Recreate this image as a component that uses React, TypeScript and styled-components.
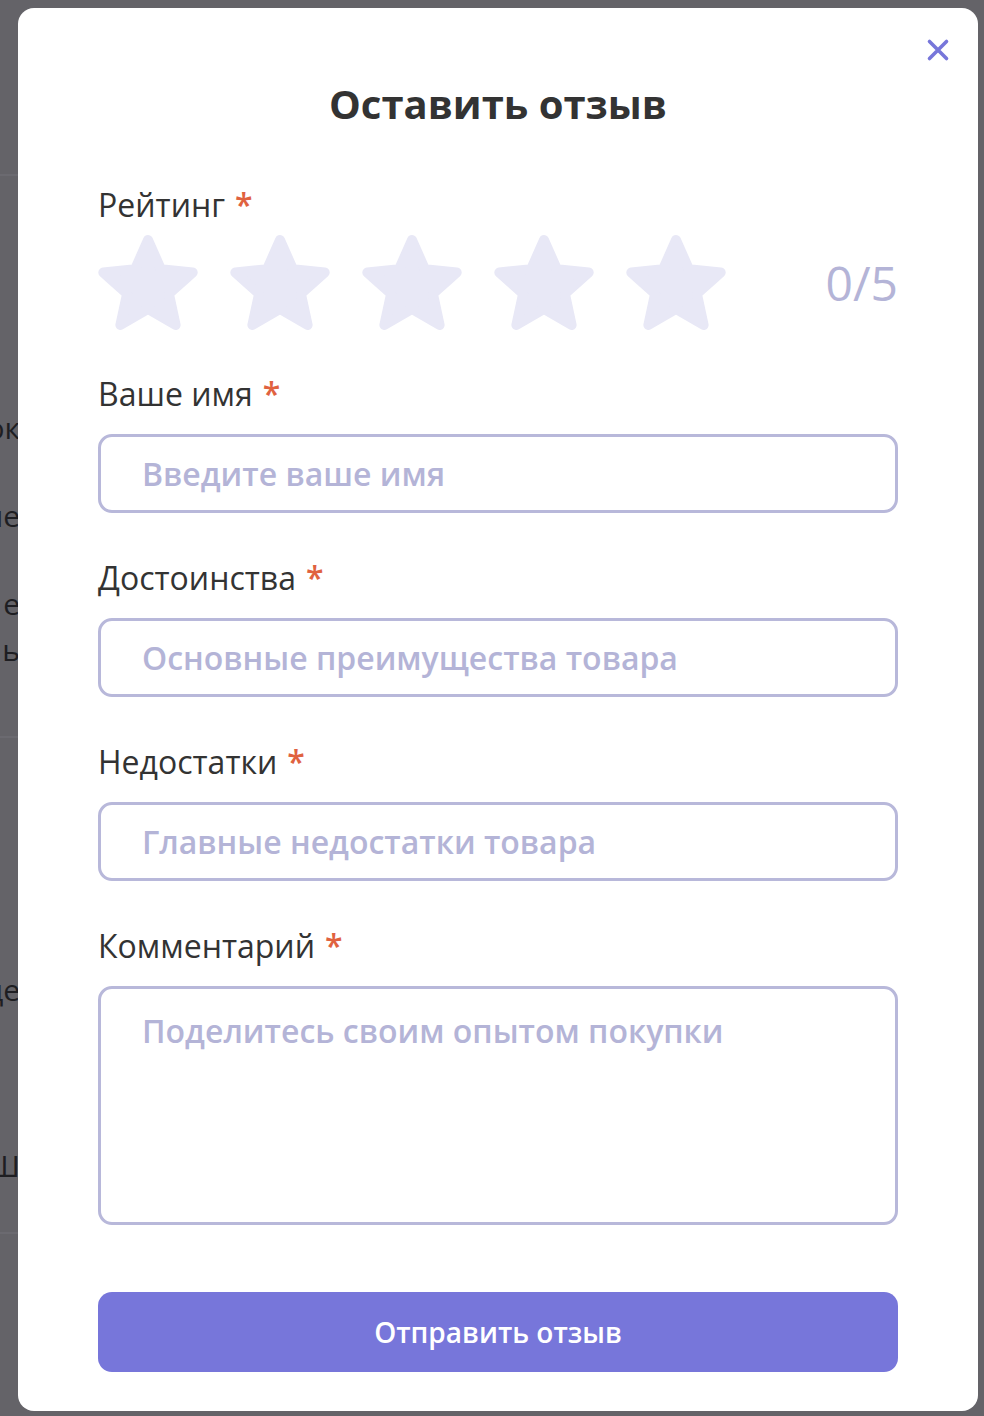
import React from "react";
import styled, { createGlobalStyle } from "styled-components";

const GlobalStyle = createGlobalStyle`
    html, body {
        margin: 0;
        padding: 0;
        width: 984px;
        height: 1416px;
        overflow: hidden;
        background-color: #646368;
        font-family: "Open Sans", "Noto Sans", sans-serif;
    }
    * { box-sizing: border-box; }
`;

const PageBehind = styled.div`
    width: 984px;
    height: 1416px;
    display: grid;
    grid-template-columns: 40px 1fr 40px;
    margin-left: -20px;
    color: #1e1e22;
    font-size: 30px;
`;

const BehindColumn = styled.div<{ $align?: string }>`
    display: flex;
    flex-direction: column;
    text-align: ${({ $align }) => $align || "left"};
`;

const BehindLine = styled.div<{ $top: number }>`
    margin-top: ${({ $top }) => $top}px;
    line-height: 40px;
    white-space: nowrap;
`;

const BehindRule = styled.div<{ $top: number }>`
    margin-top: ${({ $top }) => $top}px;
    height: 2px;
    background-color: #6b6a70;
`;

const Overlay = styled.div`
    position: fixed;
    inset: 0;
    padding: 8px 6px 5px 18px;
    display: flex;
`;

const Modal = styled.div`
    position: relative;
    flex: 1;
    background-color: #ffffff;
    border-radius: 16px;
    padding: 70px 80px 39px 80px;
    display: flex;
    flex-direction: column;
`;

const CloseButton = styled.button`
    position: absolute;
    top: 22px;
    right: 20px;
    width: 40px;
    height: 40px;
    border: none;
    background: none;
    padding: 0;
    display: flex;
    align-items: center;
    justify-content: center;
    cursor: pointer;
`;

const Title = styled.h2`
    margin: 0 0 55px 0;
    font-size: 40px;
    line-height: 52px;
    font-weight: 700;
    color: #333333;
    text-align: center;
`;

const Field = styled.div`
    display: flex;
    flex-direction: column;
    margin-bottom: 45px;
`;

const Label = styled.label`
    font-size: 32px;
    line-height: 40px;
    font-weight: 400;
    color: #333333;
    margin-bottom: 20px;
`;

const Required = styled.span`
    color: #e0623f;
    font-weight: 600;
    margin-left: 10px;
`;

const RatingRow = styled.div`
    display: flex;
    align-items: center;
    gap: 28px;
    margin-top: -12px;
    margin-bottom: -4px;
    margin-left: -2px;
`;

const StarButton = styled.button`
    width: 104px;
    height: 100px;
    border: none;
    background: none;
    padding: 0;
    cursor: pointer;
    display: flex;
`;

const Score = styled.div`
    margin-left: auto;
    font-size: 48px;
    line-height: 60px;
    color: #b4b4d7;
    font-weight: 400;
`;

const TextInput = styled.input`
    height: 79px;
    width: 100%;
    border: 3px solid #b8b8da;
    border-radius: 14px;
    padding: 0 41px;
    font-family: inherit;
    font-size: 32px;
    font-weight: 600;
    color: #333333;
    outline: none;
    &::placeholder {
        color: #b4b4d7;
    }
`;

const TextArea = styled.textarea`
    height: 239px;
    width: 100%;
    border: 3px solid #b8b8da;
    border-radius: 14px;
    padding: 20px 41px;
    font-family: inherit;
    font-size: 32px;
    line-height: 44px;
    font-weight: 600;
    color: #333333;
    resize: none;
    outline: none;
    &::placeholder {
        color: #b4b4d7;
    }
`;

const SubmitButton = styled.button`
    margin-top: auto;
    height: 80px;
    width: 100%;
    border: none;
    border-radius: 14px;
    background-color: #7776da;
    color: #ffffff;
    font-family: inherit;
    font-size: 28px;
    font-weight: 600;
    cursor: pointer;
`;

const starPoints = (() => {
    const cx = 52;
    const cy = 54;
    const outer = 47;
    const inner = 22;
    const pts: string[] = [];
    for (let i = 0; i < 10; i++) {
        const r = i % 2 === 0 ? outer : inner;
        const a = (Math.PI / 5) * i - Math.PI / 2;
        pts.push(`${(cx + r * Math.cos(a)).toFixed(2)},${(cy + r * Math.sin(a)).toFixed(2)}`);
    }
    return pts.join(" ");
})();

const Star = () => (
    <svg width="104" height="100" viewBox="0 0 104 100">
        <polygon
            points={starPoints}
            fill="#e8e8f6"
            stroke="#e8e8f6"
            strokeWidth="10"
            strokeLinejoin="round"
        />
    </svg>
);

const CloseIcon = () => (
    <svg width="24" height="24" viewBox="0 0 24 24">
        <path
            d="M3.5 3.5 L20.5 20.5 M20.5 3.5 L3.5 20.5"
            stroke="#7776da"
            strokeWidth="3.6"
            strokeLinecap="round"
            fill="none"
        />
    </svg>
);

const fields = [
    { label: "Ваше имя", placeholder: "Введите ваше имя" },
    { label: "Достоинства", placeholder: "Основные преимущества товара" },
    { label: "Недостатки", placeholder: "Главные недостатки товара" },
];

export default function App() {
    return (
        <>
            <GlobalStyle />
            <PageBehind>
                <BehindColumn $align="right">
                    <BehindRule $top={174} />
                    <BehindLine $top={232}>ок</BehindLine>
                    <BehindLine $top={48}>не</BehindLine>
                    <BehindLine $top={48}>е</BehindLine>
                    <BehindLine $top={6}>ь</BehindLine>
                    <BehindRule $top={66} />
                    <BehindLine $top={232}>це</BehindLine>
                    <BehindLine $top={136}>Ш</BehindLine>
                    <BehindRule $top={46} />
                </BehindColumn>
                <div />
                <BehindColumn>
                    <BehindLine $top={580}>Пр</BehindLine>
                    <BehindLine $top={22}>Ц</BehindLine>
                </BehindColumn>
            </PageBehind>
            <Overlay>
                <Modal>
                    <CloseButton aria-label="Закрыть">
                        <CloseIcon />
                    </CloseButton>
                    <Title>Оставить отзыв</Title>

                    <Field>
                        <Label>
                            Рейтинг<Required>*</Required>
                        </Label>
                        <RatingRow>
                            {[0, 1, 2, 3, 4].map((i) => (
                                <StarButton key={i} aria-label={`${i + 1}`}>
                                    <Star />
                                </StarButton>
                            ))}
                            <Score>0/5</Score>
                        </RatingRow>
                    </Field>

                    {fields.map((f) => (
                        <Field key={f.label}>
                            <Label>
                                {f.label}<Required>*</Required>
                            </Label>
                            <TextInput placeholder={f.placeholder} />
                        </Field>
                    ))}

                    <Field>
                        <Label>
                            Комментарий<Required>*</Required>
                        </Label>
                        <TextArea placeholder="Поделитесь своим опытом покупки" />
                    </Field>

                    <SubmitButton>Отправить отзыв</SubmitButton>
                </Modal>
            </Overlay>
        </>
    );
}
